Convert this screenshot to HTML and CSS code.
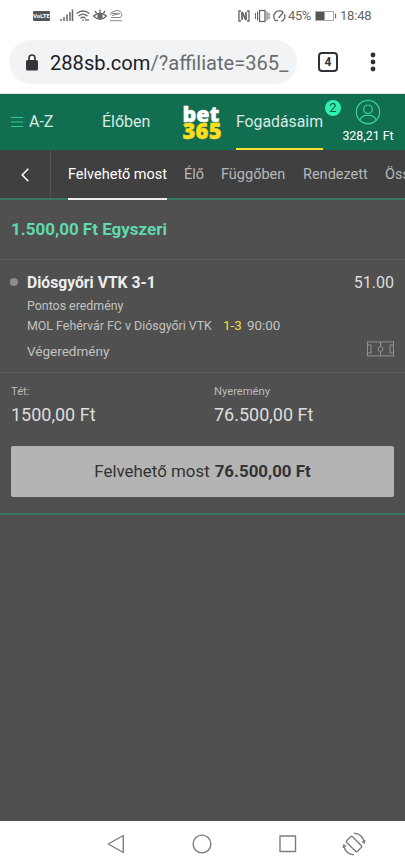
FILE: index.html
```html
<!DOCTYPE html>
<html lang="hu">
<head>
<meta charset="utf-8">
<meta name="viewport" content="width=device-width, initial-scale=1">
<title>Fogadásaim</title>
<link rel="stylesheet" href="styles.css">
</head>
<body>
<div class="status">
  <span class="volte">VoLTE</span>
  <svg class="status-left" width="64" height="14" viewBox="0 0 64 14" fill="none" stroke="#666" stroke-width="1.3">
    <path d="M1 10v2M4 8v4M7 5.5V12M10 3v9M12.500 .5V12" stroke-width="1.5"/>
    <path d="M16.500 4.500Q23 -.5 29.500 4.500M18.500 7Q23 3.200 27.500 7M20.500 9.200Q23 7.300 25.500 9.200"/><path d="M23 10.500v1.500M26 10v2M28 10v2"/>
    <path d="M33.500 7Q40 1.500 46.500 7Q40 13.500 33.500 7ZM35 2l1.500 2M40 .5v3M45 2l-1.500 2"/><circle cx="40" cy="7.200" r="2" fill="#666"/>
    <path d="M50 11.700h12M51 8.500h9q3-1 1.500-4Q60 .5 55 2Q50 3 50.500 6M52 6.500l8-2M52 4.500h7" stroke-width="1" stroke="#888"/>
  </svg>
  <svg class="status-right" width="50" height="14" viewBox="0 0 50 14" fill="none" stroke="#666" stroke-width="1.300">
    <path d="M3 12H1V2h2M9 2h2v10H9"/><path d="M4 11V3l4 8V3" stroke-width="1.700"/>
    <path d="M17.500 4v6M31 4v6M19.500 2.500v9M29 2.500v9" stroke-width="1"/><rect x="21.500" y="1.500" width="5.500" height="11"/>
    <path d="M38 12A5.500 5.500 0 1 1 45 3M46.500 5A5.500 5.500 0 0 1 43 12.500M40.500 9l5-6M38 12l2-1"/>
  </svg>
  <span class="pct">45%</span>
  <svg class="battery" width="22" height="12" viewBox="0 0 22 12"><rect x=".5" y="1.500" width="18" height="9" fill="none" stroke="#aaa"/><path d="M1 2h8.500v8H1z" fill="#555"/><path d="M20.500 3.500v5" stroke="#777" stroke-width="1.300"/></svg>
  <span class="clock">18:48</span>
</div>
<div class="browser">
  <div class="address">
    <svg class="lock" width="12" height="17" viewBox="0 0 12 17"><rect y="6" width="12" height="10.500" rx="1.500" fill="#333538"/><path d="M3 7V4a3 3 0 0 1 6 0v3" fill="none" stroke="#333538" stroke-width="1.600"/></svg>
    <div class="url">288sb.com<span>/?affiliate=365_</span></div>
  </div>
  <div class="tabs">4</div>
  <svg class="more" width="6" height="20" viewBox="0 0 6 20" fill="#303134"><circle cx="3" cy="3" r="2.400"/><circle cx="3" cy="10" r="2.400"/><circle cx="3" cy="17" r="2.400"/></svg>
</div>
<header class="header">
  <svg class="burger" width="12" height="12" viewBox="0 0 12 12"><path d="M0 1.500h12M0 6h12M0 10.500h12" stroke="#2ecc95" stroke-width="1.200"/></svg>
  <a class="az">A-Z</a>
  <a class="live">Élőben</a>
  <div class="logo"><span>bet</span><span class="logo-num">365</span></div>
  <a class="mybets">Fogadásaim<span class="badge">2</span></a>
  <div class="account">
    <svg width="26" height="26" viewBox="0 0 26 26" fill="none" stroke="#3bd09c" stroke-width="1.200"><circle cx="13" cy="13" r="11.700"/><circle cx="13" cy="10.300" r="4.300"/><path d="M4.800 21.200Q7 16 13 16.500Q19 16 21.200 21.200"/></svg>
    <span>328,21 Ft</span>
  </div>
</header>
<nav class="subnav">
  <div class="back"><svg width="8" height="14" viewBox="0 0 8 14"><path d="M7.300 .8L1.200 7l6.100 6.200" fill="none" stroke="#fff" stroke-width="1.500"/></svg></div>
  <a class="current">Felvehető most</a><a class="n-live">Élő</a><a class="n-open">Függőben</a><a class="n-settled">Rendezett</a><a class="n-all">Összes</a>
</nav>
<main class="bet">
  <h1 class="title">1.500,00 Ft Egyszeri</h1>
  <section class="selection">
    <div class="pick"><i class="dot"></i><b>Diósgyőri VTK 3-1</b><span class="odds">51.00</span></div>
    <div class="market">Pontos eredmény</div>
    <div class="match"><span class="teams">MOL Fehérvár FC v Diósgyőri VTK</span><span class="score">1-3</span><span class="time">90:00</span></div>
    <div class="result"><span>Végeredmény</span>
      <svg width="27" height="16" viewBox="0 0 27 16" fill="none" stroke="#929292" stroke-width="1"><rect x=".5" y=".9" width="26" height="14"/><path d="M.5 4h3.500v8H.5M26.500 4H23v8h3.500M13.500 1v4.500M13.500 10.500V15"/><circle cx="13.500" cy="8" r="2.500"/></svg>
    </div>
  </section>
  <section class="amounts">
    <div class="stake"><small>Tét:</small><span>1500,00 Ft</span></div>
    <div class="returns"><small>Nyeremény</small><span>76.500,00 Ft</span></div>
  </section>
  <button class="cashout"><span>Felvehető most</span><b>76.500,00 Ft</b></button>
</main>
<footer class="navbar">
  <svg class="nav-back" width="18" height="20" viewBox="0 0 18 20"><path d="M16.300 1.500v17L1.300 10z"/></svg>
  <svg class="nav-home" width="20" height="20" viewBox="0 0 20 20"><circle cx="10" cy="10" r="8.900"/></svg>
  <svg class="nav-recent" width="18" height="18" viewBox="0 0 18 18"><rect x="1" y="1" width="15.500" height="15.500"/></svg>
  <svg class="nav-rotate" width="24" height="24" viewBox="0 0 24 24"><rect x="8" y="4.500" width="8" height="15" rx="1" transform="rotate(-45 12 12)"/><path d="M12 1.200Q20 1.500 22.300 10M22.800 8l-.5 3-2.500-1.500M12 22.800Q4 22.500 1.700 14M1.200 16l.5-3 2.500 1.500"/></svg>
</footer>
</body>
</html>
```
FILE: styles.css
```css
* { box-sizing: border-box; }
body { margin: 0; width: 405px; height: 867px; overflow: hidden; display: flex; flex-direction: column; background: #505050; font-family: Roboto, sans-serif; }
svg { display: block; flex: none; }
a, span, b, small { white-space: nowrap; }

.status { height: 31px; flex: none; display: flex; align-items: center; background: #fff; color: #666; font-size: 13px; }
.volte { width: 17px; height: 10px; margin-left: 33px; background: #555; color: #fff; font-size: 6px; font-weight: 700; line-height: 10px; text-align: center; border-radius: 1px; }
.status-left { margin-left: 10px; }
.status-right { margin-left: 114px; }
.pct { width: 24px; font-size: 13px; letter-spacing: -.4px; }
.battery { margin-left: 3px; }
.clock { margin-left: 3px; letter-spacing: -.2px; }

.browser { height: 63px; flex: none; display: flex; align-items: center; background: #fff; border-bottom: 1px solid #dce9e4; }
.address { width: 288px; height: 44px; margin-left: 9px; padding-left: 17px; border-radius: 22px; background: #f1f3f4; display: flex; align-items: center; }
.url { width: 240px; margin-left: 12px; padding-top: 1px; white-space: nowrap; font-size: 20.1px; color: #202124; }
.url span { color: #6a6d70; }
.tabs { width: 20px; height: 20px; margin-left: 21px; border: 2px solid #303134; border-radius: 4px; font-size: 12px; font-weight: 700; line-height: 16px; text-align: center; color: #303134; }
.more { margin-left: 32px; }

.header { height: 56px; flex: none; display: flex; align-items: stretch; background: #126e51; color: #fff; font-size: 16px; line-height: 55px; }
.burger { margin: 22px 0 0 11px; }
.az { width: 73px; margin-left: 6px; color: #d9e9e3; }
.live { width: 80.5px; color: #d9e9e3; }
.logo { width: 53.5px; display: flex; flex-direction: column; padding-top: 11px; font: 800 21.5px/17px "Open Sans", sans-serif; -webkit-text-stroke: .4px; }
.logo-num { color: #ffdf1b; font-size: 22px; letter-spacing: .2px; }
.mybets { position: relative; width: 87px; border-bottom: 2px solid #f5e334; color: #d9e9e3; font-size: 15.8px; }
.badge { position: absolute; left: 89px; top: 6px; width: 16px; height: 16px; border-radius: 50%; background: #2ef0b0; color: #12553f; font-size: 13px; line-height: 16px; text-align: center; }
.account { width: 52px; margin-left: 19px; padding-top: 5px; display: flex; flex-direction: column; align-items: center; font-size: 12.4px; line-height: 21px; }

.subnav { height: 50px; flex: none; display: flex; background: #404040; border-bottom: 2px solid #367761; font-size: 14.5px; line-height: 49px; color: #b8b8b8; }
.subnav a { flex: none; }
.back { width: 51px; flex: none; display: flex; align-items: center; padding: 2px 0 0 21px; border-right: 1px solid #555; }
.subnav .current { position: relative; width: 99px; margin: 0 17px; color: #fff; }
.subnav .current::after { content: ""; position: absolute; left: 0; right: 0; bottom: -2px; height: 2px; background: #eee; }
.n-live { width: 37px; }
.n-open { width: 82px; }
.n-settled { width: 82px; }
.n-all { width: 20px; overflow: hidden; }

.bet { height: 315px; flex: none; border-bottom: 2px solid #367761; }
.title { height: 60px; margin: 0; padding-left: 11px; border-bottom: 1px solid #5f5f5f; font-size: 17px; font-weight: 700; line-height: 58px; color: #5fd9ae; }
.selection { height: 113px; padding: 11px 11px 0 27px; border-bottom: 1px solid #5f5f5f; color: #c2c2c2; font-size: 12.4px; }
.pick { display: flex; align-items: center; height: 22px; font-size: 15.7px; color: #eee; }
.dot { width: 8px; height: 8px; margin: 0 9px 0 -17px; border-radius: 50%; background: #8c8c8c; }
.odds { margin-left: auto; font-size: 16px; color: #ddd; }
.market { height: 23px; line-height: 25px; }
.match { display: flex; height: 19px; line-height: 19px; }
.teams { width: 196px; }
.score { width: 24px; font-size: 13.4px; color: #f0dc3c; }
.time { font-size: 13.4px; }
.result { height: 32px; display: flex; justify-content: space-between; align-items: center; font-size: 13.5px; }
.result svg { margin-top: -5px; }
.amounts { height: 73px; padding: 11px 11px 0; display: flex; color: #ddd; }
.amounts div { display: flex; flex-direction: column; }
.stake { width: 203px; }
.amounts small { font-size: 11.2px; line-height: 15px; color: #bbb; }
.amounts span { font-size: 18px; line-height: 31px; }
.cashout { width: 383px; height: 51px; margin: 0 11px; padding: 0 0 2px; border: 0; border-radius: 2px; background: #b4b4b4; display: flex; justify-content: center; align-items: center; gap: 5px; font: 16.9px Roboto, sans-serif; color: #333; }

.navbar { height: 46px; margin-top: auto; flex: none; display: flex; align-items: center; background: #fff; }
.navbar svg { fill: none; stroke: #7d7d7d; stroke-width: 1.4; stroke-linejoin: round; }
.nav-back { margin-left: 107px; }
.nav-home { margin-left: 67px; }
.nav-recent { margin-left: 67px; }
.nav-rotate { margin-left: 45px; }
```
